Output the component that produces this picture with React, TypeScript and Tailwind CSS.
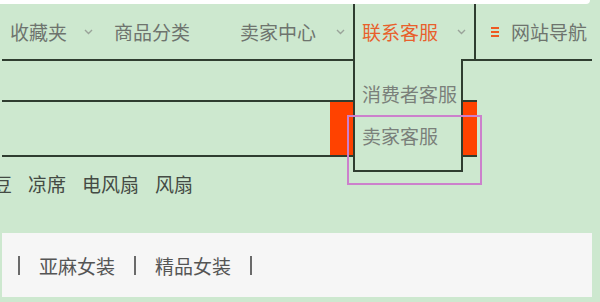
import React from "react";

const Chevron = () => (
  <svg width="9" height="6" viewBox="0 0 9 6" className="shrink-0">
    <polyline
      points="1,1 4.5,4.5 8,1"
      fill="none"
      stroke="#9aa39a"
      strokeWidth="1.4"
    />
  </svg>
);

const MenuIcon = () => (
  <svg width="8" height="10" viewBox="0 0 8 10" className="shrink-0">
    <rect x="0" y="0" width="8" height="2" fill="#ee5a22" />
    <rect x="0" y="4" width="8" height="2" fill="#ee5a22" />
    <rect x="0" y="8" width="8" height="2" fill="#ee5a22" />
  </svg>
);

const Bar = ({ className = "" }: { className?: string }) => (
  <span className={"block w-[2px] h-[19px] bg-[#6a6a6a] shrink-0 " + className} />
);

export default function App() {
  const hotWords = ["凉席", "电风扇", "风扇"];

  return (
    <div
      className="relative w-[600px] h-[302px] overflow-hidden bg-[#cde8cf] text-[19px] leading-none"
      style={{ fontFamily: '"Microsoft YaHei", "Noto Sans CJK SC", sans-serif' }}
    >
      {/* top strip */}
      <div className="h-[4px] w-[590px] bg-white rounded-br-[4px]" />

      {/* nav */}
      <div className="ml-[2px] w-[590px] h-[57px] flex border-b-2 border-[#2f3d30] text-[#6e746e]">
        <div className="w-[351px] h-full flex items-center pl-[8px]">
          <span>收藏夹</span>
          <span className="ml-[17px]">
            <Chevron />
          </span>
          <span className="ml-[21px]">商品分类</span>
          <span className="ml-[50px]">卖家中心</span>
          <span className="ml-[20px]">
            <Chevron />
          </span>
        </div>
        <div className="w-[121px] h-full flex items-center border-l-2 border-[#2f3d30] pl-[7px]">
          <span className="text-[#e8602c]">联系客服</span>
          <span className="ml-[19px]">
            <Chevron />
          </span>
        </div>
        <div className="flex-1 h-full flex items-center border-l-2 border-[#2f3d30] pl-[15px]">
          <MenuIcon />
          <span className="ml-[12px]">网站导航</span>
        </div>
      </div>

      {/* search bar */}
      <div className="mt-[39px] ml-[2px] flex h-[57px]">
        <div className="w-[328px] border-y-2 border-[#2f3d30]" />
        <div className="w-[147px] bg-[#ff4200] border-y-2 border-[#2f3d30]" />
      </div>

      {/* hot words */}
      <div className="mt-[14px] h-[24px] flex items-center gap-[16px] text-[#444b44] ml-[-7px]">
        <span>豆</span>
        {hotWords.map((w) => (
          <span key={w}>{w}</span>
        ))}
      </div>

      {/* category panel */}
      <div className="mt-[38px] ml-[2px] w-[590px] h-[64px] bg-[#f6f6f6] flex items-center pl-[16px] text-[#555]">
        <Bar />
        <span className="ml-[19px]">亚麻女装</span>
        <Bar className="ml-[19px]" />
        <span className="ml-[19px]">精品女装</span>
        <Bar className="ml-[19px]" />
      </div>

      {/* dropdown menu */}
      <div className="absolute left-[353px] top-[59px] w-[110px] h-[113px] bg-[#cde8cf] border-x-2 border-b-2 border-[#2f3d30] pt-[13px] pl-[7px] text-[#7a807a]">
        <div className="h-[42px] flex items-center">消费者客服</div>
        <div className="h-[42px] flex items-center">卖家客服</div>
      </div>

      {/* highlight box */}
      <div className="absolute left-[347px] top-[115px] w-[135px] h-[70px] border-2 border-[#cc80cc] pointer-events-none" />
    </div>
  );
}
